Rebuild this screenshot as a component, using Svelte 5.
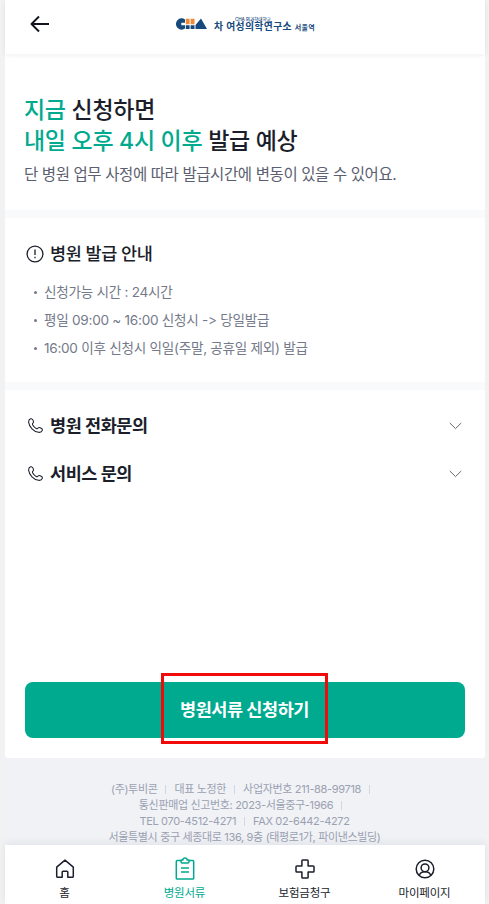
<script lang="ts">
    const notices = [
        "신청가능 시간 : 24시간",
        "평일 09:00 ~ 16:00 신청시 -> 당일발급",
        "16:00 이후 신청시 익일(주말, 공휴일 제외) 발급",
    ];

    const company = [
        { items: ["(주)투비콘", "대표 노정한", "사업자번호 211-88-99718"], trailing: true },
        { items: ["통신판매업 신고번호: 2023-서울중구-1966"], trailing: true },
        { items: ["TEL 070-4512-4271", "FAX 02-6442-4272"], trailing: false },
        { items: ["서울특별시 중구 세종대로 136, 9층 (태평로1가, 파이낸스빌딩)"], trailing: false },
    ];

    const tabs = [
        { icon: "home", label: "홈" },
        { icon: "document", label: "병원서류" },
        { icon: "insurance", label: "보험금청구" },
        { icon: "profile", label: "마이페이지" },
    ];

    let activeTab = $state("document");
    let contacts = $state([
        { label: "병원 전화문의", open: false },
        { label: "서비스 문의", open: false },
    ]);
</script>

<div class="page">
    <div class="app">
        <header class="header">
            <button class="header__back" aria-label="뒤로">
                <svg width="20" height="18" viewBox="0 0 20 18">
                    <path d="M9 1.5 1.5 9 9 16.5M1.5 9H19" />
                </svg>
            </button>
            <div class="logo">
                <svg class="logo__mark" width="33" height="12" viewBox="0 0 33 12">
                    <path
                        fill="#16497c"
                        d="M11 1.4A5.7 5.7 0 1 0 11 10.6V7.2H7.3V4.8H11ZM11.8 7.2H15.6V11H11.8ZM16.6 7.2H20.5V11H16.6ZM27 .5 33 11H21.5V7Z"
                    />
                    <path fill="#ef8b3b" d="M11.8.8H15.6V6.2H11.8ZM16.6.8H20.5V6.2H16.6Z" />
                </svg>
                <div class="logo__text">
                    <span class="logo__school">CHA 의과학대학교</span>
                    <span class="logo__name">차 여성의학연구소 <small>서울역</small></span>
                </div>
            </div>
        </header>

        <main>
            <section class="estimate">
                <h1 class="estimate__title">
                    <em>지금</em> 신청하면<br />
                    <em>내일 오후 4시 이후</em> 발급 예상
                </h1>
                <p class="estimate__note">단 병원 업무 사정에 따라 발급시간에 변동이 있을 수 있어요.</p>
            </section>

            <section class="guide">
                <h2 class="guide__title">
                    <svg width="18" height="18" viewBox="0 0 18 18">
                        <circle cx="9" cy="9" r="7.9" />
                        <path d="M9 4.6V10M9 11.8V13.2" />
                    </svg>
                    병원 발급 안내
                </h2>
                <ul class="guide__list">
                    {#each notices as notice}
                        <li>{notice}</li>
                    {/each}
                </ul>
            </section>

            <section class="contact">
                {#each contacts as contact}
                    <button class="contact__row" onclick={() => (contact.open = !contact.open)}>
                        <svg class="contact__phone" width="15" height="15" viewBox="0 0 16 16">
                            <path
                                d="M2.8.8C1.2 1.4.5 3 .7 4.7 1.3 9.6 6 14.6 11.2 15.3 13.2 15.5 14.8 14.7 15.3 13.1 15.6 12 14.9 11.3 13.6 10.6 12.3 9.9 11.5 9.9 10.8 10.7 10.2 11.4 9.7 11.7 8.8 11.2 7.1 10.3 5.7 8.8 4.9 7.2 4.5 6.3 4.8 5.9 5.4 5.3 6.1 4.6 6 3.8 5.4 2.5 4.6 1 3.9.4 2.8.8Z"
                            />
                        </svg>
                        <span>{contact.label}</span>
                        <svg class="contact__arrow" width="13" height="8" viewBox="0 0 13 8">
                            <path d="M.8 1 6.5 6.6 12.2 1" />
                        </svg>
                    </button>
                {/each}
            </section>

            <div class="action">
                <button class="action__button">
                    <span>병원서류 신청하기</span>
                    <i class="action__highlight" aria-hidden="true"></i>
                </button>
            </div>
        </main>

        <footer class="company">
            {#each company as line}
                <p>
                    {#each line.items as item, i}
                        <span>{item}</span>{#if line.trailing || i < line.items.length - 1}<i></i>{/if}
                    {/each}
                </p>
            {/each}
        </footer>

        <nav class="tabs">
            {#each tabs as tab}
                <button
                    class="tabs__item"
                    class:tabs__item--active={activeTab === tab.icon}
                    onclick={() => (activeTab = tab.icon)}
                >
                    <svg width="24" height="24" viewBox="0 0 24 24">
                        {#if tab.icon === "home"}
                            <path
                                d="M3.7 10.1 12 3.2 20.3 10.1V19.2Q20.3 20.3 19.2 20.3H14.8V15.1Q14.8 14.2 13.9 14.2H10.1Q9.2 14.2 9.2 15.1V20.3H4.8Q3.7 20.3 3.7 19.2Z"
                            />
                        {:else if tab.icon === "document"}
                            <path
                                d="M8 3.5H4.2Q3.3 3.5 3.3 4.4V21.2Q3.3 22.1 4.2 22.1H19.8Q20.7 22.1 20.7 21.2V4.4Q20.7 3.5 19.8 3.5H16M8 3.1H9.8Q10 1 12 1T14.2 3.1H16V4.8Q16 6 14.8 6H9.2Q8 6 8 4.8ZM8 11H16M8 15H16"
                            />
                        {:else if tab.icon === "insurance"}
                            <path
                                d="M9.7 3H14.3Q15.1 3 15.1 3.8V8.9H20.2Q21 8.9 21 9.7V14.3Q21 15.1 20.2 15.1H15.1V20.2Q15.1 21 14.3 21H9.7Q8.9 21 8.9 20.2V15.1H3.8Q3 15.1 3 14.3V9.7Q3 8.9 3.8 8.9H8.9V3.8Q8.9 3 9.7 3Z"
                            />
                        {:else}
                            <circle cx="12" cy="12" r="8.8" />
                            <circle cx="12" cy="10.8" r="3.9" />
                            <path d="M6.2 18.5C7 16 9 14.8 12 14.8S17 16 17.8 18.5" />
                        {/if}
                    </svg>
                    <span>{tab.label}</span>
                </button>
            {/each}
        </nav>
    </div>
</div>

<style>
    :global(body) {
        background: #f1f2f4;
    }

    .page {
        display: flex;
        padding: 0 4px 0 5px;
        height: 904px;
        overflow: hidden;
        box-sizing: border-box;
        background: #f2f2f3;
        font-family: Inter, "Noto Sans CJK KR", sans-serif;
        color: #1b1e2b;
    }

    .app {
        display: flex;
        flex-direction: column;
        width: 480px;
        height: 904px;
        background: #f0f2f6;
    }

    button {
        padding: 0;
        border: 0;
        background: none;
        color: inherit;
        font: inherit;
        cursor: pointer;
    }

    svg {
        display: block;
        flex: none;
        fill: none;
        stroke: currentColor;
        stroke-width: 1.5;
        stroke-linejoin: round;
    }

    .header {
        z-index: 1;
        display: grid;
        grid-template-columns: 60px 1fr 60px;
        align-items: center;
        flex: none;
        height: 54px;
        padding-bottom: 6px;
        box-sizing: border-box;
        background: #fff;
        box-shadow: 0 1px 5px rgba(20, 25, 40, 0.07);
    }

    .header__back {
        margin-left: 25px;
        width: 20px;
    }

    .header__back svg {
        stroke-width: 1.9;
        color: #12141d;
    }

    .logo {
        display: flex;
        justify-content: center;
        align-items: center;
        gap: 7px;
        height: 20px;
        color: #16497c;
        white-space: nowrap;
    }

    .logo__mark {
        stroke: none;
    }

    .logo__text {
        display: flex;
        flex-direction: column;
        width: 102px;
    }

    .logo__school {
        padding-left: 21px;
        font-size: 4.6px;
        line-height: 5px;
        letter-spacing: -0.1px;
        font-weight: 500;
    }

    .logo__name {
        font-size: 9.8px;
        line-height: 9px;
        letter-spacing: 0.4px;
        font-weight: 700;
    }

    .logo__name small {
        font-size: 7px;
        letter-spacing: 0.3px;
    }

    main {
        display: flex;
        flex-direction: column;
        flex: none;
        height: 704px;
        background: #fff;
        border-radius: 0 0 3px 3px;
    }

    section {
        box-sizing: border-box;
        flex: none;
    }

    .estimate {
        height: 164px;
        padding: 41px 19px 0;
        border-bottom: 8px solid #f9fafb;
    }

    .estimate__title {
        margin: 0;
        font-size: 23px;
        line-height: 31px;
        font-weight: 500;
        letter-spacing: -0.3px;
    }

    .estimate__title em {
        color: #00aa8f;
        font-style: normal;
    }

    .estimate__note {
        margin: 6px 0 0;
        color: #5b6070;
        font-size: 15.5px;
        line-height: 24px;
        letter-spacing: -0.4px;
    }

    .guide {
        height: 172px;
        padding: 23px 21px 0;
        border-bottom: 8px solid #f9fafb;
    }

    .guide__title {
        display: flex;
        align-items: center;
        gap: 6px;
        margin: 0;
        font-size: 17.5px;
        line-height: 26px;
        font-weight: 500;
        letter-spacing: -0.45px;
    }

    .guide__title svg {
        stroke-width: 1.3;
    }

    .guide__list {
        margin: 11px 0 0;
        padding: 0;
        list-style: none;
        color: #757a8a;
        font-size: 13.6px;
        line-height: 28px;
        letter-spacing: -0.27px;
    }

    .guide__list li {
        display: flex;
        align-items: center;
        gap: 7px;
        white-space: nowrap;
    }

    .guide__list li::before {
        content: "";
        width: 3px;
        height: 3px;
        margin-left: 8px;
        border-radius: 50%;
        background: currentColor;
    }

    .contact {
        padding: 12px 22px 0 21px;
    }

    .contact__row {
        display: flex;
        align-items: center;
        width: 100%;
        height: 48px;
        padding: 0 1px;
        font-size: 17.5px;
        line-height: 26px;
        font-weight: 700;
        letter-spacing: -0.45px;
    }

    .contact__row span {
        padding-bottom: 1px;
    }

    .contact__phone {
        margin: 0 7px 1px 1px;
        stroke-width: 1.1;
    }

    .contact__arrow {
        margin-left: auto;
        stroke-width: 1;
        color: #666;
    }

    .action {
        margin-top: auto;
        padding: 0 20px 20px;
    }

    .action__button {
        position: relative;
        width: 100%;
        height: 56px;
        padding: 0 1px 4px 0;
        border-radius: 8px;
        background: #00aa8f;
        color: #fff;
        font-size: 17.5px;
        font-weight: 700;
        letter-spacing: -0.45px;
    }

    .action__highlight {
        position: absolute;
        top: -9px;
        left: 136px;
        width: 167px;
        height: 71px;
        box-sizing: border-box;
        border: 3px solid #f00a0a;
    }

    .company {
        height: 87px;
        padding-top: 23px;
        box-sizing: border-box;
        flex: none;
        overflow: hidden;
        color: #9ba1b1;
        font-size: 11px;
        line-height: 16px;
    }

    .company p {
        display: flex;
        justify-content: center;
        align-items: center;
        margin: 0;
        padding-right: 1px;
        letter-spacing: -0.34px;
        white-space: nowrap;
    }

    .company i {
        width: 1px;
        height: 9px;
        margin: 0 8px;
        background: #d3d7df;
    }

    .tabs {
        z-index: 1;
        display: grid;
        grid-template-columns: repeat(4, 1fr);
        flex: none;
        height: 59px;
        background: #fff;
        box-shadow: 0 -2px 8px rgba(20, 25, 40, 0.07);
    }

    .tabs__item {
        display: flex;
        flex-direction: column;
        align-items: center;
        padding: 12px 1px 0 0;
        font-size: 11.5px;
        line-height: 18px;
        letter-spacing: -0.2px;
    }

    .tabs__item span {
        margin-top: 3px;
    }

    .tabs__item--active {
        color: #00aa8f;
    }
</style>
